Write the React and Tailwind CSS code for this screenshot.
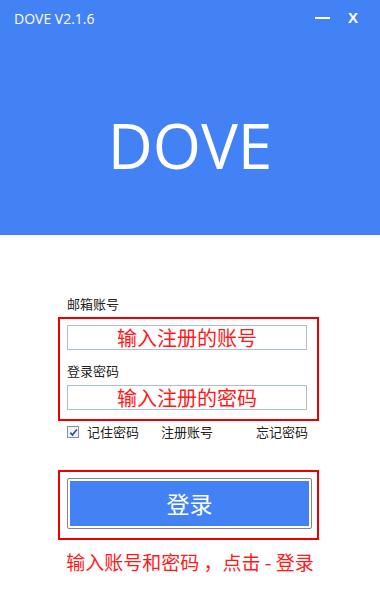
export default function App() {
  const cjk = { fontFamily: '"Noto Sans CJK SC", "Noto Sans", sans-serif' }

  return (
    <div className="w-[380px] h-[600px] bg-white overflow-hidden" style={cjk}>
      <div className="h-[235px] bg-[#4282f5] flex flex-col text-white">
        <div className="h-[36px] flex items-center pl-[14px] pr-[22px]">
          <span className="text-[14px]" style={{ fontFamily: '"Open Sans", sans-serif' }}>
            DOVE V2.1.6
          </span>
          <span className="ml-auto w-[15px] h-[1.5px] bg-white mr-[18px]" />
          <span className="text-[15px] font-bold" style={{ fontFamily: '"Liberation Sans", sans-serif' }}>
            X
          </span>
        </div>
        <div
          className="mt-[78px] text-center text-[62px] leading-[62px]"
          style={{ fontFamily: '"Open Sans", sans-serif' }}
        >
          DOVE
        </div>
      </div>

      <div className="pl-[58px]">
        <div className="mt-[61px] ml-[9px] text-[13px] leading-[16px] text-[#222]">邮箱账号</div>
        <div className="mt-[5px] w-[261px] h-[104px] border-2 border-[#ee0000] pl-[7px] pt-[6px]">
          <div className="w-[240px] h-[25px] border border-[#a9bfd6] flex items-center justify-center text-[20px] text-[#ff1a1a]">
            输入注册的账号
          </div>
          <div className="mt-[13px] text-[13px] leading-[16px] text-[#222]">登录密码</div>
          <div className="mt-[6px] w-[240px] h-[25px] border border-[#a9bfd6] flex items-center justify-center text-[20px] text-[#ff1a1a]">
            输入注册的密码
          </div>
        </div>

        <div className="mt-[3px] h-[16px] flex items-center text-[13px] text-[#222]">
          <span className="ml-[9px] w-[12px] h-[12px] border border-[#8490a3] bg-[#eef1f6] flex items-center justify-center">
            <svg width="9" height="9" viewBox="0 0 9 9">
              <path d="M1.3 4.6 L3.5 7 L7.8 1.4" fill="none" stroke="#33498a" strokeWidth="1.6" />
            </svg>
          </span>
          <span className="ml-[8px]">记住密码</span>
          <span className="ml-[22px]">注册账号</span>
          <span className="ml-[43px]">忘记密码</span>
        </div>

        <div className="mt-[30px] w-[261px] h-[70px] border-2 border-[#ee0000] pl-[7px] pt-[6px]">
          <div className="w-[245px] h-[51px] border border-[#858585] rounded-[2px] bg-white p-[2px]">
            <div className="w-full h-full bg-[#4282f5] flex items-center justify-center text-white text-[23px]">
              登录
            </div>
          </div>
        </div>
      </div>

      <div className="mt-[8px] text-center text-[19px] text-[#ff1a1a]">
        输入账号和密码 ，点击 - 登录
      </div>
    </div>
  )
}
